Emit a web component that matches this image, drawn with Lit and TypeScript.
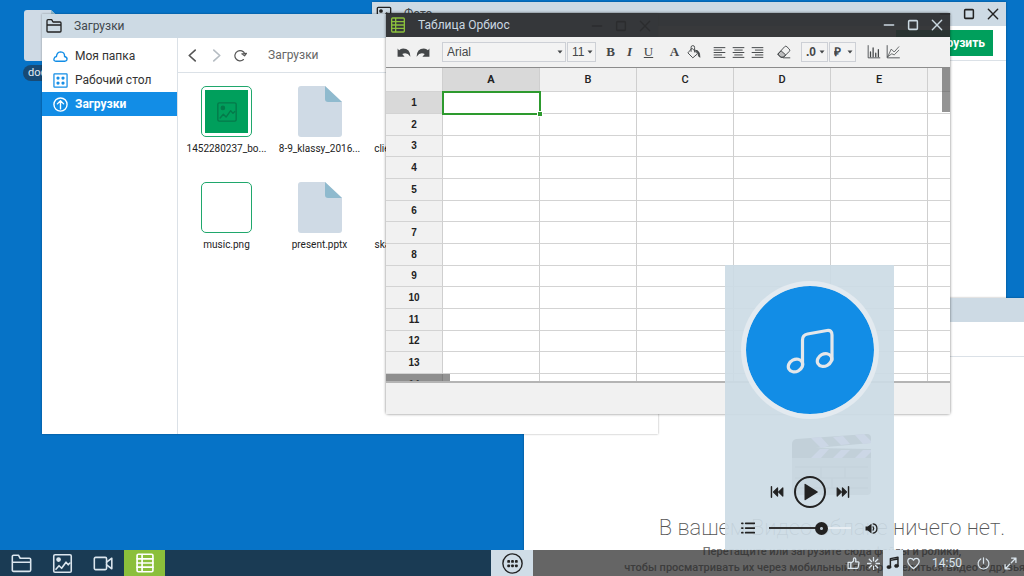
import { LitElement, html, svg, css, nothing, TemplateResult } from "lit";
import { customElement } from "lit/decorators.js";
import { classMap } from "lit/directives/class-map.js";

const shapes: Record<string, TemplateResult> = {
  folder: svg`<path d="M1.500 19.500V4Q1.500 2.500 3 2.500h5.500l2 3.500H21q1.500 0 1.500 1.500v12q0 1.500-1.500 1.500H3q-1.500 0-1.500-1.500zM1.500 10.500h21"/>`,
  photo: svg`<rect x="2" y="2" width="20" height="20" rx="1.500"/><path d="M4.500 18.500l3.500-4 3 3 5-7 2.500 3 2-2"/><circle cx="7.500" cy="7.500" r="1.800" fill="currentColor"/>`,
  camera: svg`<rect x="1.500" y="5" width="14" height="14" rx="1.500"/><path d="M15.500 10.500l6-4.500v12l-6-4.500"/>`,
  table: svg`<rect x="2.500" y="1.500" width="19" height="21" rx="1.500"/><path d="M8.500 2v20M2.500 7h19M2.500 12h19M2.500 17h19"/>`,
  min: svg`<path d="M4 12h16"/>`,
  max: svg`<rect x="4.500" y="4.500" width="15" height="15" rx="1.500"/>`,
  close: svg`<path d="M4 4l16 16M20 4L4 20"/>`,
  cloud: svg`<path d="M4.500 19.500H19.500q3-.5 3-3.500t-4-4q.5-7-6.500-7.500Q6 5 5.500 12 2 12.500 1.500 16t3 3.500z"/>`,
  tiles: svg`<rect x="1.500" y="1.500" width="21" height="21" rx="1"/><g fill="currentColor"><circle cx="8" cy="8" r="1.600"/><circle cx="16" cy="8" r="1.600"/><circle cx="8" cy="16" r="1.600"/><circle cx="16" cy="16" r="1.600"/></g>`,
  up: svg`<circle cx="12" cy="12" r="10.500"/><path d="M12 19V6M7 11l5-5 5 5"/>`,
  back: svg`<path d="M17 2L6 12l11 10"/>`,
  forward: svg`<path d="M7 2l11 10L7 22"/>`,
  reload: svg`<path d="M17.500 19.500A9.500 9.500 0 1 1 20 9M23 8l-3.500 4.500L14.500 9z"/>`,
  undo: svg`<path d="M1 6v14h12l-4-4.500q8-4 14 4.500-.5-14-12.500-14-4 0-7 3z" fill="currentColor" stroke="none"/>`,
  redo: svg`<path d="M23 6v14H11l4-4.500q-8-4-14 4.500.5-14 12.500-14 4 0 7 3z" fill="currentColor" stroke="none"/>`,
  bucket: svg`<path d="M9 6l9 9-8 7-8-8zM7 11V4q0-3 3-3t3 3v8"/><path d="M15 9q7 0 7 12-3-1-3-7z" fill="currentColor"/>`,
  left: svg`<path d="M2 3h20M2 7.500h14M2 12h20M2 16.500h14M2 21h20"/>`,
  center: svg`<path d="M2 3h20M5 7.500h14M2 12h20M5 16.500h14M2 21h20"/>`,
  right: svg`<path d="M2 3h20M8 7.500h14M2 12h20M8 16.500h14M2 21h20"/>`,
  eraser: svg`<path d="M2 15L13 3q2-2 4 0l4 4q2 2 0 4L11 21H7l-5-4q-1-1 0-2z"/><path d="M2 15l5-5 8 7-4 4H7z" fill="currentColor" fill-opacity=".3"/><path d="M11 22h11"/>`,
  bars: svg`<path d="M2 1v21h20" stroke-width="1.500"/><path d="M6 20v-8M10.500 20V5M15 20v-6M19.500 20V8"/>`,
  lines: svg`<path d="M2 1v21h21" stroke-width="1.500"/><path d="M3 20l6-13 5 5 8-9M3 20l7-5 4 2 8-8" stroke-width="1.300"/>`,
  apps: svg`<circle cx="12" cy="12" r="11"/><g fill="currentColor" stroke="none"><rect x="6" y="8" width="3.200" height="3.200" rx="1"/><rect x="10.400" y="8" width="3.200" height="3.200" rx="1"/><rect x="14.800" y="8" width="3.200" height="3.200" rx="1"/><rect x="6" y="13" width="3.200" height="3.200" rx="1"/><rect x="10.400" y="13" width="3.200" height="3.200" rx="1"/><rect x="14.800" y="13" width="3.200" height="3.200" rx="1"/></g>`,
  like: svg`<path d="M2 10h5v11H2zM7 11.500l5-4V4q0-3 3-2 2 1 1 7h4.500q2 0 1.500 2.500l-1.500 7.500q-.5 2-2.500 2H7"/>`,
  burst: svg`<path d="M12 1v6M12 17v6M1 12h6M17 12h6M4.200 4.200l4.200 4.200M15.600 15.600l4.200 4.200M4.200 19.800l4.200-4.200M15.600 8.400l4.200-4.200"/>`,
  notes: svg`<path d="M7.500 18.500V4.500l13-2.500v14M7.500 7.500l13-2.500" stroke-width="2.500"/><ellipse cx="5" cy="19" rx="3.500" ry="2.800" fill="currentColor"/><ellipse cx="18" cy="17" rx="3.500" ry="2.800" fill="currentColor"/>`,
  heart: svg`<path d="M12 21.500Q1.500 14 1.500 8T7 2.500q3.500 0 5 3.500 1.500-3.500 5-3.500 5.500 0 5.500 5.500T12 21.500z"/>`,
  power: svg`<path d="M12 1.500v10M7 3.500a10 10 0 1 0 10 0"/>`,
  expand: svg`<path d="M14 2h8v8M22 2l-8.500 8.500M10 22H2v-8M2 22l8.500-8.500"/>`,
  melody: svg`<path d="M16.500 39V14q0-5 5-6L41 4.500q5-.8 5 4.500v25"/><ellipse cx="9.500" cy="39.500" rx="7.500" ry="6" transform="rotate(-28 9.500 39.500)"/><ellipse cx="38.500" cy="34" rx="7.500" ry="6" transform="rotate(-28 38.500 34)"/>`,
  prev: svg`<path d="M2.500 3v18" stroke-width="2.500"/><path d="M13 5v14L6 12zM22 5v14l-7-7z" fill="currentColor" stroke-width="2"/>`,
  next: svg`<path d="M21.500 3v18" stroke-width="2.500"/><path d="M11 5v14l7-7zM2 5v14l7-7z" fill="currentColor" stroke-width="2"/>`,
  play: svg`<path d="M6.500 4.500v15q0 1.200 1 .6l12-7.500q.8-.6 0-1.200L7.500 3.900q-1-.6-1 .6z" fill="currentColor" stroke="none"/>`,
  list: svg`<path d="M8 4h15M8 12h15M8 20h15M1.500 4h1.500M1.500 12h1.500M1.500 20h1.500"/>`,
  volume: svg`<path d="M1 8.500h4L12 3v18l-7-5.500H1z" fill="currentColor" stroke="none"/><path d="M15 9q2 3 0 6M15 3.500q7 1 7 8.500t-7 8.500"/>`,
  caret: svg`<path d="M2 6h20L12 18z" fill="currentColor" stroke="none"/>`,
};

const icon = (name: string, size: number, stroke = 2, box = 24) => html`<svg
  class="icon" width=${size} height=${size} viewBox="0 0 ${box} ${box}" fill="none"
  stroke="currentColor" stroke-width=${stroke} stroke-linejoin="round" stroke-linecap="round"
  aria-hidden="true">${shapes[name]}</svg>`;

const fileShape = html`<svg class="sheet" width="44" height="51" viewBox="0 0 44 51" aria-hidden="true">
  <path d="M3 0h24l17 16v32q0 3-3 3H3q-3 0-3-3V3q0-3 3-3z" fill="#cfdae5"/>
  <path d="M27 0l17 16H30q-3 0-3-3z" fill="#8fbace"/>
</svg>`;

interface FileEntry { name: string; kind: "image" | "blank" | "file"; }

const files: FileEntry[] = [
  { name: "1452280237_bo...", kind: "image" },
  { name: "8-9_klassy_2016...", kind: "file" },
  { name: "clients_2016_ja...", kind: "file" },
  { name: "music.png", kind: "blank" },
  { name: "present.pptx", kind: "file" },
  { name: "skazka_2016_a...", kind: "file" },
];

const columns = ["A", "B", "C", "D", "E", ""];
const rows = Array.from({ length: 14 }, (_, i) => i + 1);

@customElement("app-root")
export class AppRoot extends LitElement {
  static styles = css`
    * { box-sizing: border-box; }
    :host {
      display: block; position: relative; height: 100vh; overflow: hidden;
      background: #0673c7; color: #333; font: 12px/16px Roboto, sans-serif;
    }
    button, select, input { font: inherit; color: inherit; margin: 0; padding: 0; border: 0; background: none; }
    button { display: flex; align-items: center; justify-content: center; cursor: pointer; }
    a { color: inherit; text-decoration: none; }
    .icon, .sheet { display: block; flex: none; }

    .shortcut { position: absolute; left: 23px; top: 10px; padding-left: 1px; }
    .pill {
      display: block; margin-top: 4px; margin-left: -1px; padding: 0 5px; border-radius: 8px;
      background: #174a75; color: #e3ebf2; font-size: 11px;
    }

    .window { position: absolute; display: flex; flex-direction: column; background: #fff; box-shadow: 0 0 2px rgba(0, 0, 0, .35); }
    .titlebar {
      display: flex; align-items: center; height: 24px; flex: none; padding: 0 1px 0 4px;
      background: #cddae4; color: #222;
    }
    .name { margin: 0 0 0 12px; flex: 1; font-size: 12px; font-weight: 400; color: #41474c; }
    .controls { display: flex; }
    .controls button { width: 24px; height: 24px; }
    .bar { display: flex; align-items: center; flex: none; height: 35px; border-bottom: 1px solid #dbe1e7; }

    .photos { left: 372px; top: 2px; width: 634px; height: 330px; }
    .photos .bar { justify-content: flex-end; padding-right: 13px; }
    .upload { width: 97px; height: 26px; background: #009f5c; color: #fff; font-weight: 700; justify-content: flex-end; padding-right: 8px; }

    .video { left: 524px; top: 298px; width: 616px; height: 410px; }
    .empty { flex: 1; text-align: center; padding-top: 77px; color: #666; }
    .clapper { display: block; margin: 0 auto; }
    .empty h2 { margin: 17px 0 0; font-size: 22px; line-height: 32px; font-weight: 200; color: #555; }
    .empty p { margin: 0; white-space: nowrap; font-size: 11px; font-weight: 500; color: #777; }

    .downloads { left: 42px; top: 14px; width: 616px; height: 420px; }
    .split { display: flex; flex: 1; min-height: 0; }
    .places { width: 136px; border-right: 1px solid #dbe1e7; padding-top: 6px; }
    .place { display: flex; align-items: center; height: 24px; gap: 7px; padding-left: 11px; }
    .place .icon { color: #128de6; }
    .place.active { background: #128de6; color: #fff; font-weight: 700; }
    .place.active .icon { color: #fff; }
    .pane { flex: 1; }
    .nav { gap: 10px; padding-left: 7px; color: #555; }
    .nav button { width: 14px; height: 24px; }
    .nav button.dim { color: #b5bcc2; }
    .nav .path { margin-left: 11px; color: #666; }
    .files { display: grid; grid-template-columns: repeat(3, 93px); row-gap: 22px; padding: 13px 2px; list-style: none; margin: 0; }
    .file { display: flex; flex-direction: column; align-items: center; gap: 4px; height: 74px; }
    .caption { white-space: nowrap; font-size: 10px; line-height: 16px; color: #222; }
    .thumb { width: 51px; height: 51px; flex: none; border: 1px solid #1fa76c; border-radius: 5px; padding: 3px; }
    .picture { display: grid; place-items: center; height: 100%; background: #009f5c; color: #047a4a; }

    .tables { left: 386px; top: 13px; width: 564px; height: 401px; background: none; border-radius: 2px; box-shadow: 0 0 3px rgba(0, 0, 0, .55); }
    .tables .titlebar { background: rgba(44, 45, 47, .94); color: #cbd8e1; }
    .logo { color: #8bc03c; }
    .tables .name { color: #cbd8e1; }
    .tools { display: flex; align-items: center; flex: none; height: 31px; padding-left: 8px; background: #f1f1f1; border-bottom: 1px solid #8c8c8c; color: #444749; }
    .tools button { width: 19px; height: 22px; }
    .group { display: flex; margin-left: 7px; }
    .group.first { margin-left: 4px; }
    .pick { display: grid; align-items: center; height: 20px; border: 1px solid #cdd0d6; margin-right: 1px; background: #f3f3f3; }
    .pick select { grid-area: 1 / 1; width: 100%; height: 18px; appearance: none; padding-left: 4px; font: 12px/18px "Liberation Sans", sans-serif; }
    .pick .icon { grid-area: 1 / 1; justify-self: end; margin-right: 2px; pointer-events: none; }
    .pick.face { width: 124px; margin-left: 10px; }
    .pick.size { width: 29px; }
    .pick.small { width: 27px; }
    .pick.small select { font-size: 12px; font-weight: 700; }
    .pick.format { margin-left: 8px; }
    .glyph { font: 700 13px/18px "Liberation Serif", serif; }
    .slanted { font-style: italic; }
    .under { font-weight: 400; text-decoration: underline; }

    .viewport { position: relative; flex: 1; min-height: 0; overflow: hidden; background: #fff; border-bottom: 2px solid #b4b4b4; }
    table { width: 639px; table-layout: fixed; border-collapse: separate; border-spacing: 0; }
    th, td { height: 22px; padding: 0; border-right: 1px solid #cfcfcf; border-bottom: 1px solid #d3d3d3; }
    tbody tr:nth-child(3n) > * { height: 21px; }
    thead th { height: 24px; }
    th { background: #f1f1f1; font: 700 10px/16px "Liberation Sans", sans-serif; color: #222; text-align: center; }
    thead th { font-size: 11px; font-weight: 500; font-family: Roboto, sans-serif; }
    th.corner { width: 57px; }
    th.current { background: #d9d9d9; }
    thead th.current { font-weight: 700; }
    td.selected { outline: 2px solid #2d9a2e; outline-offset: -1px; position: relative; }
    td.selected::after { content: ""; position: absolute; right: -3px; bottom: -3px; width: 4px; height: 4px; background: #2d9a2e; outline: 1px solid #fff; }
    .vscroll, .hscroll { position: absolute; background: rgba(70, 70, 70, .58); }
    .vscroll { right: 0; top: 0; width: 8px; height: 44px; }
    .hscroll { left: 0; bottom: 0; width: 64px; height: 7px; }
    .status { flex: none; height: 31px; background: #f1f1f1; }

    .taskbar {
      position: absolute; left: 0; right: 0; bottom: 0; height: 26px;
      display: grid; grid-template-columns: 1fr 42px 1fr; background: rgba(35, 35, 35, .7); color: #dbe6ee;
    }
    .apps { display: flex; padding-left: 1px; }
    .apps button { width: 41px; }
    .apps button.open { background: #8bbf3b; color: #fff; }
    .launcher { background: #d0dde7; color: #222; }
    .tray { display: flex; justify-content: flex-end; padding-right: 4px; }
    .tray button { width: 20px; }
    .tray .on { background: #d0dde7; color: #222; }
    .clock { line-height: 26px; padding: 0 11px 0 9px; }
    .tray button:last-child { margin-left: 7px; }

    .player {
      position: absolute; right: 130px; bottom: 26px; width: 169px; height: 285px;
      display: flex; flex-direction: column; align-items: center; padding-top: 16px;
      background: rgba(204, 219, 229, .92); color: #222;
    }
    .cover {
      display: grid; place-items: center; width: 138px; height: 138px; flex: none; border-radius: 50%;
      border: 5px solid rgba(230, 236, 241, .85); background: #128de6; background-clip: padding-box; color: #e4e7ea;
    }
    .deck { display: flex; align-items: center; gap: 10px; margin-top: 57px; }
    .play { width: 32px; height: 32px; border: 2px solid #222; border-radius: 50%; }
    .mix { display: flex; align-items: center; gap: 14px; margin-top: 12px; }
    .mix button { height: 16px; }
    .mix input {
      appearance: none; width: 82px; height: 14px;
      background: linear-gradient(90deg, #333 0 60%, #e8eef3 60%) center / 100% 2px no-repeat;
    }
    .mix input::-webkit-slider-thumb {
      appearance: none; width: 13px; height: 13px; border-radius: 50%;
      background: radial-gradient(circle, #b9c6d0 0 1px, #222 2px);
    }
  `;

  private titlebar(title: string, glyph: string, accent = false) {
    return html`<header class="titlebar">
      <span class=${classMap({ logo: accent })}>${icon(glyph, 16, 2)}</span>
      <h1 class="name">${title}</h1>
      <span class="controls">
        <button aria-label="Свернуть">${icon("min", 14, 2.5)}</button>
        <button aria-label="Развернуть">${icon("max", 14, 2.6)}</button>
        <button aria-label="Закрыть">${icon("close", 14, 2.4)}</button>
      </span>
    </header>`;
  }

  private tool(label: string, content: unknown) {
    return html`<button aria-label=${label}>${content}</button>`;
  }

  private pick(kind: string, label: string, value: string) {
    return html`<label class="pick ${kind}">
      <select aria-label=${label}><option>${value}</option></select>${icon("caret", 6)}
    </label>`;
  }

  private thumbnail(kind: FileEntry["kind"]) {
    if (kind === "file") return fileShape;
    return html`<span class="thumb">${kind === "image"
      ? html`<span class="picture">${icon("photo", 22, 1.5)}</span>` : nothing}</span>`;
  }

  private photosWindow() {
    return html`<section class="window photos">
      ${this.titlebar("Фото", "photo")}
      <div class="bar"><button class="upload">Загрузить</button></div>
    </section>`;
  }

  private videoWindow() {
    return html`<section class="window video">
      ${this.titlebar("Видео", "camera")}
      <div class="bar"></div>
      <div class="empty">
        <svg class="clapper" width="80" height="61" viewBox="0 0 80 61" aria-hidden="true">
          <path d="M0 24h79v33q0 4-4 4H4q-4 0-4-4z" fill="#a4a4a4"/>
          <path d="M0 24V10q0-4 4-5L75 0q4 0 4 4v5L24 14l55 1v9z" fill="#505050"/>
          <path d="M19 4l10-1 8 9-8 2zM41 3l10-1 7 8-9 1zM63 1l9-1 7 7v2l-8 1zM19 24l9-9h9l-8 9zM41 24l8-8h9l-8 8zM63 24l8-8h8v2l-6 6z" fill="#c9a0f0"/>
          <path d="M3 33h73M3 44h73M3 54h73M29 33v11M53 33v11M40 44v10" stroke="#606060" fill="none"/>
        </svg>
        <h2>В вашем Видео облаке ничего нет.</h2>
        <p>Перетащите или загрузите сюда файлы и ролики,</p>
        <p>чтобы просматривать их через мобильный плеер и делиться видео с друзьями</p>
      </div>
    </section>`;
  }

  private downloadsWindow() {
    return html`<section class="window downloads">
      ${this.titlebar("Загрузки", "folder")}
      <div class="split">
        <nav class="places">
          <a class="place" href="#home">${icon("cloud", 15, 2.2)}Моя папка</a>
          <a class="place" href="#desktop">${icon("tiles", 15, 2)}Рабочий стол</a>
          <a class="place active" href="#downloads">${icon("up", 15, 2.2)}Загрузки</a>
        </nav>
        <div class="pane">
          <div class="bar nav">
            <button aria-label="Назад">${icon("back", 13, 3)}</button>
            <button class="dim" aria-label="Вперёд">${icon("forward", 13, 3)}</button>
            <button aria-label="Обновить">${icon("reload", 13, 2.2)}</button>
            <span class="path">Загрузки</span>
          </div>
          <ul class="files">
            ${files.map((f) => html`<li class="file">${this.thumbnail(f.kind)}<span class="caption">${f.name}</span></li>`)}
          </ul>
        </div>
      </div>
    </section>`;
  }

  private tablesWindow() {
    return html`<section class="window tables">
      ${this.titlebar("Таблица Орбиос", "table", true)}
      <div class="tools">
        ${this.tool("Отменить", icon("undo", 14))}
        ${this.tool("Повторить", icon("redo", 14))}
        ${this.pick("face", "Шрифт", "Arial")}
        ${this.pick("size", "Размер", "11")}
        <span class="group first">
          ${this.tool("Полужирный", html`<span class="glyph">B</span>`)}
          ${this.tool("Курсив", html`<span class="glyph slanted">I</span>`)}
          ${this.tool("Подчёркнутый", html`<span class="glyph under">U</span>`)}
        </span>
        <span class="group">
          ${this.tool("Цвет текста", html`<span class="glyph">A</span>`)}
          ${this.tool("Заливка", icon("bucket", 14, 1.6))}
        </span>
        <span class="group">
          ${this.tool("По левому краю", icon("left", 13, 1.8))}
          ${this.tool("По центру", icon("center", 13, 1.8))}
          ${this.tool("По правому краю", icon("right", 13, 1.8))}
        </span>
        <span class="group">${this.tool("Очистить", icon("eraser", 14, 1.6))}</span>
        ${this.pick("small format", "Формат числа", ".0")}
        ${this.pick("small", "Валюта", "₽")}
        <span class="group">
          ${this.tool("Диаграмма", icon("bars", 14, 2.2))}
          ${this.tool("График", icon("lines", 14))}
        </span>
      </div>
      <div class="viewport">
        <table>
          <thead><tr>
            <th class="corner"></th>
            ${columns.map((c, i) => html`<th scope="col" class=${classMap({ current: i === 0 })}>${c}</th>`)}
          </tr></thead>
          <tbody>
            ${rows.map((r) => html`<tr>
              <th scope="row" class=${classMap({ current: r === 1 })}>${r}</th>
              ${columns.map((_, i) => html`<td class=${classMap({ selected: r === 1 && i === 0 })}></td>`)}
            </tr>`)}
          </tbody>
        </table>
        <span class="vscroll"></span>
        <span class="hscroll"></span>
      </div>
      <footer class="status"></footer>
    </section>`;
  }

  private taskbar() {
    return html`<footer class="taskbar">
      <div class="apps">
        <button aria-label="Файлы">${icon("folder", 21, 1.8)}</button>
        <button aria-label="Фото">${icon("photo", 21, 1.8)}</button>
        <button aria-label="Видео">${icon("camera", 21, 1.8)}</button>
        <button class="open" aria-label="Таблица">${icon("table", 20, 2)}</button>
      </div>
      <button class="launcher" aria-label="Приложения">${icon("apps", 21, 1.6)}</button>
      <div class="tray">
        <button aria-label="Нравится">${icon("like", 13, 2.4)}</button>
        <button aria-label="Активность">${icon("burst", 13, 2.4)}</button>
        <button class="on" aria-label="Музыка">${icon("notes", 14, 1)}</button>
        <button aria-label="Избранное">${icon("heart", 13, 2.4)}</button>
        <time class="clock">14:50</time>
        <button aria-label="Выключить">${icon("power", 13, 2.2)}</button>
        <button aria-label="На весь экран">${icon("expand", 13, 2.4)}</button>
      </div>
    </footer>`;
  }

  private player() {
    return html`<aside class="player">
      <div class="cover">${icon("melody", 48, 3.2, 48)}</div>
      <div class="deck">
        <button aria-label="Предыдущий">${icon("prev", 14)}</button>
        <button class="play" aria-label="Играть">${icon("play", 24)}</button>
        <button aria-label="Следующий">${icon("next", 14)}</button>
      </div>
      <div class="mix">
        <button aria-label="Список">${icon("list", 14, 3)}</button>
        <input type="range" aria-label="Громкость" min="0" max="100" value="66">
        <button aria-label="Звук">${icon("volume", 13, 2.4)}</button>
      </div>
    </aside>`;
  }

  render() {
    return html`
      <a class="shortcut" href="#document">${fileShape}<span class="pill">document</span></a>
      ${this.photosWindow()}
      ${this.videoWindow()}
      ${this.downloadsWindow()}
      ${this.tablesWindow()}
      ${this.taskbar()}
      ${this.player()}
    `;
  }
}
